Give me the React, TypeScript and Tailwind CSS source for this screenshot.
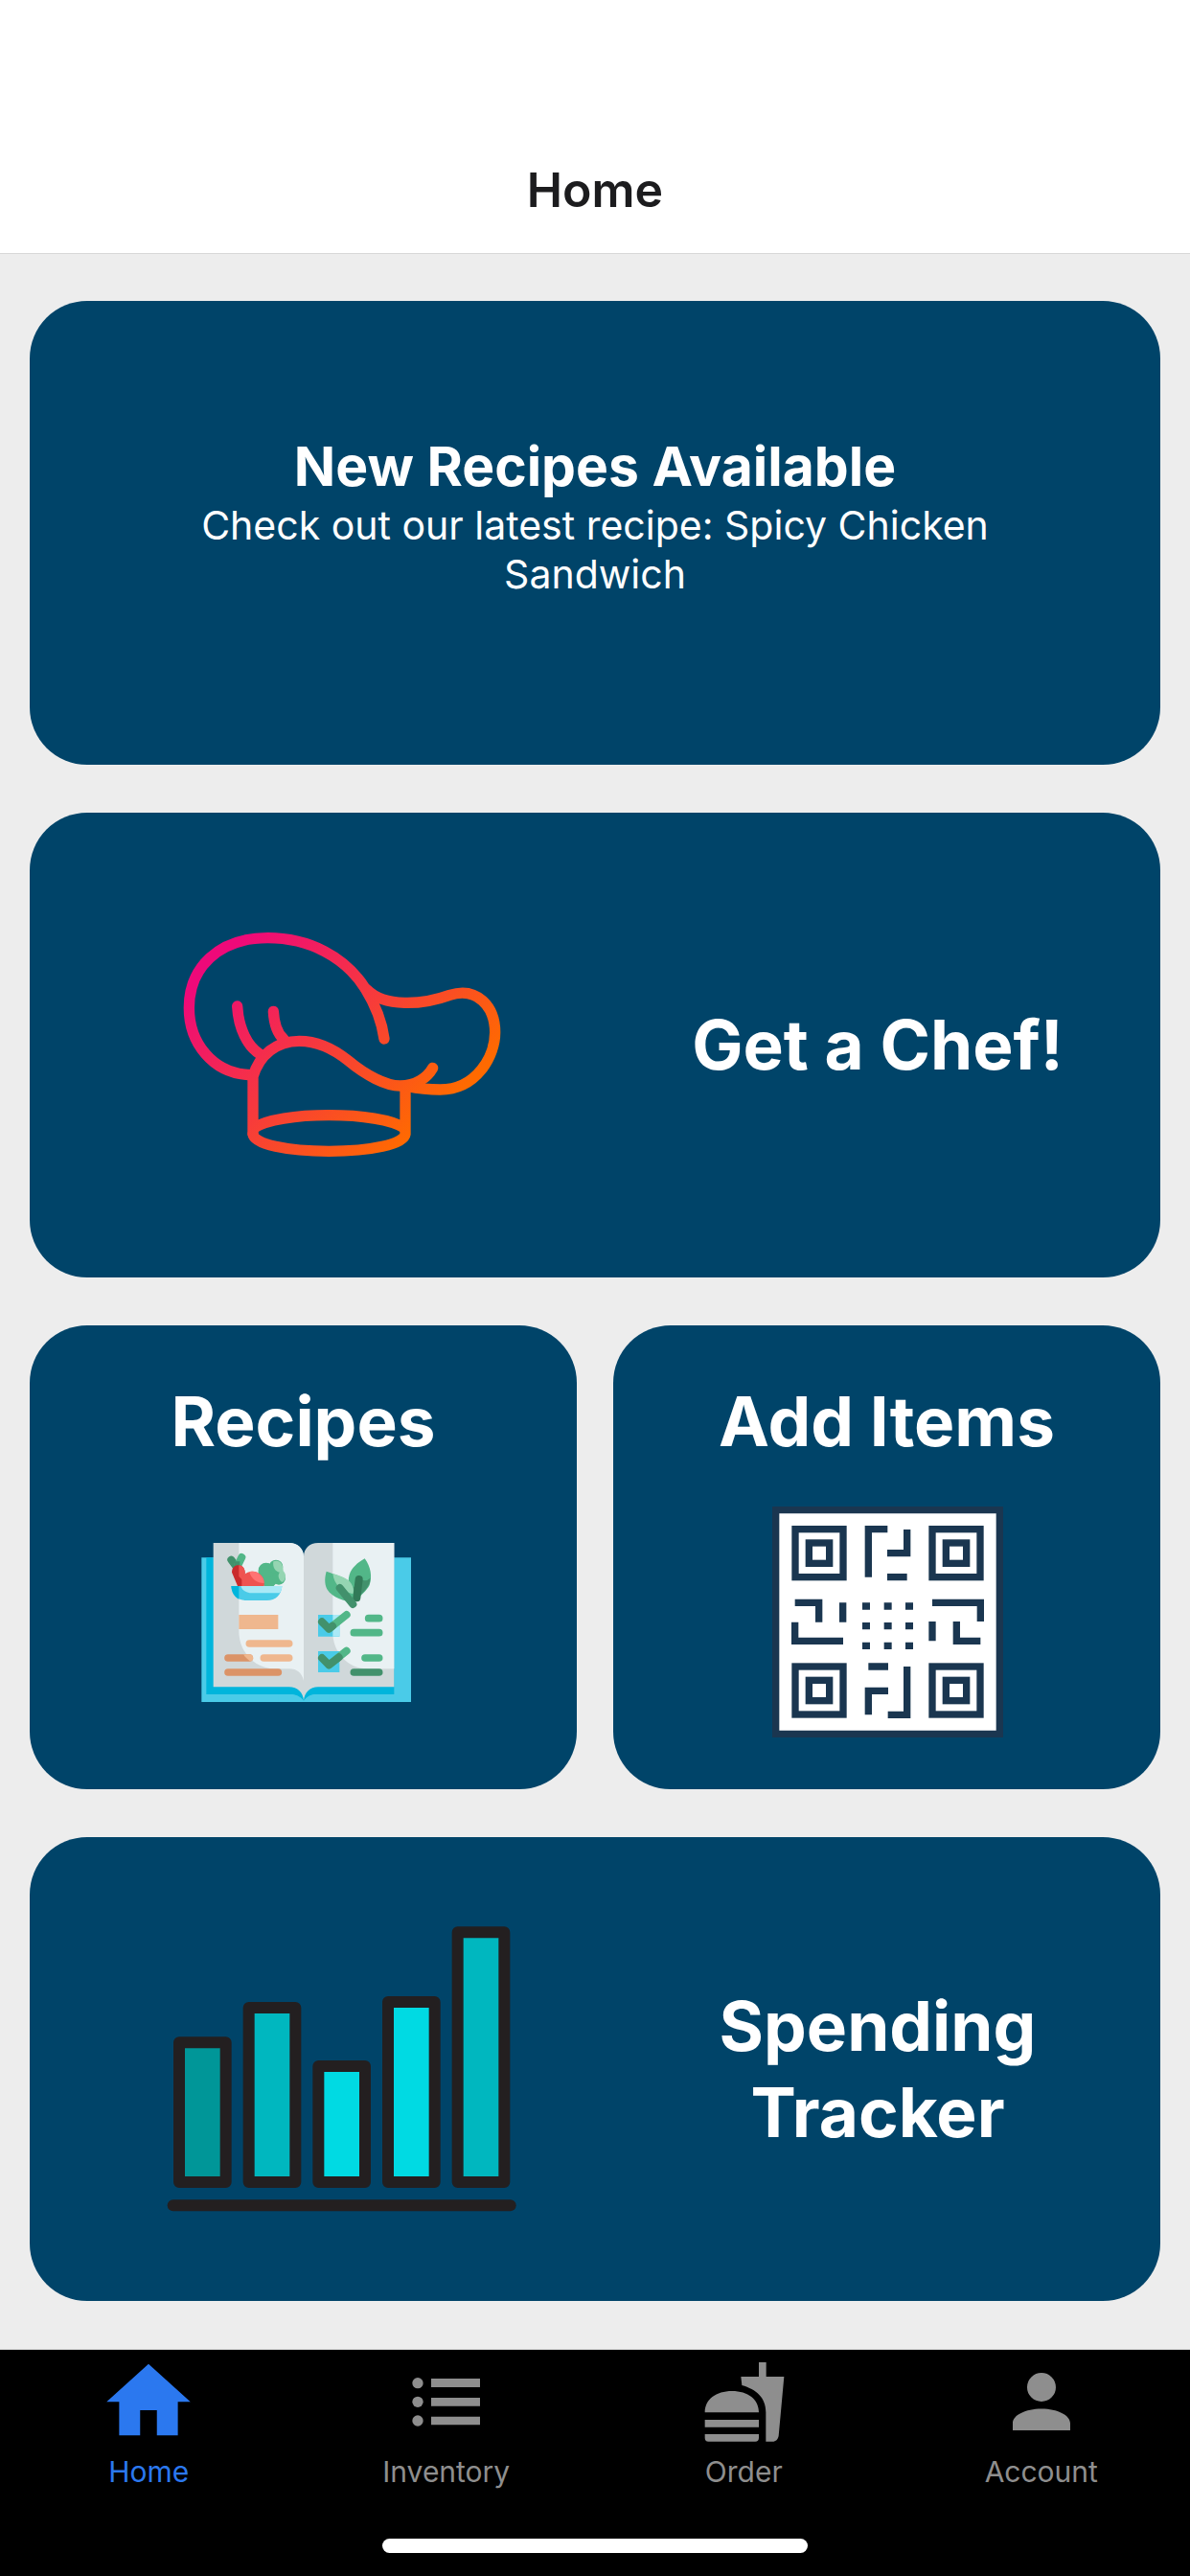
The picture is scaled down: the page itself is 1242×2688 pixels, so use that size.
import type { ReactNode } from "react";

function ChefHat() {
  return (
    <svg viewBox="0 0 1110 840" className="h-[280px] w-[370px]" aria-hidden="true">
      <defs>
        <linearGradient id="hat" gradientUnits="userSpaceOnUse" x1="167" y1="167" x2="745" y2="745">
          <stop offset="0" stopColor="#ee0979" />
          <stop offset="1" stopColor="#ff6a00" />
        </linearGradient>
      </defs>
      <g fill="none" stroke="url(#hat)" strokeWidth="34" strokeLinecap="round">
        <path strokeLinecap="butt" d="M279 515C150 515 79 410 79 305C79 180 170 86 325 86C455 86 568 145 631 245" />
        <path d="M631 245C662 295 683 350 690 402" />
        <path d="M636 248C690 304 810 296 895 265C980 238 1037 300 1037 382C1037 455 980 561 865 561C835 561 805 559 762 550" />
        <path d="M279 700V520C300 452 352 409 424 409C480 409 530 432 577 470C632 516 695 549 740 549C790 549 825 523 842 493" />
        <path d="M230 300C234 370 262 425 300 449" />
        <path d="M343 316C345 350 355 385 375 402" />
        <path d="M279 700C283 732 385 754 517 754S751 732 756 700V555" />
        <path d="M282 681C320 655 415 641 517 641S715 655 753 681" />
      </g>
    </svg>
  );
}

function RecipeBook() {
  return (
    <svg viewBox="-25 -75 810 810" className="size-[270px]" aria-hidden="true">
      <path fill="#4acbe8" d="M60 136H716V588H60Z" />
      <path fill="#00b5dc" d="M75 136H663V564H420C402 564 388 572 380 585C372 572 356 564 335 564H75Z" />
      <path fill="#4acbe8" d="M300 564H335C356 564 372 572 380 586V588H300ZM460 564H420C402 564 388 572 380 586V588H460Z" />
      <path fill="#004469" d="M330 88H430V136H330Z" />
      <path fill="#d0d8da" d="M97 90H334C361 90 380 108 380 133C380 108 398 90 425 90H663V541H425C400 541 382 558 380 584C378 558 361 541 334 541H97Z" />
      <path fill="#e9f1f3" d="M177 90H334C361 90 380 108 380 133V521C374 498 360 484 334 484H290C225 484 177 430 177 365Z" />
      <path fill="#e9f1f3" d="M471 90H663V484H580C515 484 471 430 471 370Z" />

      <path d="M153 143L168 163" stroke="#42916c" strokeWidth="24" strokeLinecap="round" />
      <path d="M186 135L174 160" stroke="#52b788" strokeWidth="24" strokeLinecap="round" />
      <path d="M165 148L180 148V165H160Z" fill="#42916c" />
      <path fill="#c92a2c" d="M155 182C155 168 164 160 175 160C188 160 196 170 196 184L192 225H173Z" />
      <path fill="#ef5350" d="M177 160C189 161 196 170 196 184L192 210L177 195Z" />
      <path fill="#52b788" d="M256 225H286L292 218L311 219C320 200 300 160 275 156C255 148 236 165 238 186Z" />
      <circle cx="262" cy="176" r="24" fill="#52b788" />
      <circle cx="293" cy="165" r="22" fill="#52b788" />
      <circle cx="302" cy="200" r="21" fill="#52b788" />
      <path fill="#95d5b2" d="M285 148C302 141 316 152 316 178C327 188 325 208 312 213C300 203 298 190 305 182C290 180 282 165 285 148Z" />
      <path fill="#ef5350" d="M186 225V198C196 184 207 179 220 179C241 179 256 196 256 216V225Z" />
      <path fill="#ff7373" d="M210 181C232 174 256 194 256 216C234 216 216 204 210 181Z" />
      <path fill="#4acbe8" d="M153 225H312C310 252 292 270 265 270H200C173 270 155 252 153 225Z" />
      <path fill="#00b5dc" d="M153 225H177V266C163 259 154 245 153 225Z" />
      <path fill="#a9e9f6" d="M183 225H312C312 234 309 241 305 247H220C200 247 187 238 183 225Z" />

      <path fill="#efb78e" d="M177 315H300V360H177Z" />
      <g strokeLinecap="round" strokeWidth="23" fill="none">
        <path stroke="#efb78e" d="M210 405H334M255 450H334" />
        <path stroke="#db9367" d="M143 450H210M143 495H300" />
        <path stroke="#52b788" d="M583 326H616M537 371H616M572 450H616" />
        <path stroke="#42916c" d="M537 495H616" />
      </g>
      <path fill="#efb78e" d="M191 439H210C218 439 222 445 222 453C220 458 217 460 213 461C204 455 197 448 191 439Z" />

      <path fill="#52b788" d="M571 139C590 165 595 195 586 222C577 240 558 255 538 275C525 250 515 215 523 190C530 168 548 152 571 139Z" />
      <path fill="#42916c" d="M588 200C590 226 566 244 545 264L535 230L560 205C570 210 580 208 588 200Z" />
      <path fill="#52b788" d="M451 179C480 190 515 198 530 220C538 236 540 256 540 276C505 273 470 262 453 235C444 216 446 196 451 179Z" />
      <path fill="#95d5b2" d="M471 186C500 194 526 204 533 226C537 236 536 244 534 250C500 240 475 222 471 186Z" />
      <path d="M553 204L546 262" stroke="#327a58" strokeWidth="24" strokeLinecap="round" />
      <path d="M493 231L534 282" stroke="#42916c" strokeWidth="24" strokeLinecap="round" />

      <path fill="#4acbe8" d="M425 315H492V383H425ZM425 429H492V495H425Z" />
      <path fill="#a9e9f6" d="M471 315H492V383H471Z" />
      <g fill="none" strokeWidth="24" strokeLinecap="round" strokeLinejoin="round">
        <path stroke="#52b788" d="M459 359L514 315M459 472L514 428" />
        <path stroke="#42916c" d="M437 337L459 359L470 350M437 450L459 472L490 448" />
      </g>
    </svg>
  );
}

const finders = [
  [106, 111],
  [535, 111],
  [106, 541],
  [535, 541],
];

function QrCode() {
  return (
    <svg viewBox="0 0 810 810" className="size-[270px]" aria-hidden="true">
      <path fill="#1a3650" d="M45 51H768V774H45Z" />
      <path fill="#fff" d="M67 73H746V752H67Z" />
      <g fill="none" stroke="#1a3650" strokeWidth="22">
        {finders.map(([x, y]) => (
          <g key={`${x}-${y}`}>
            <rect x={x + 11} y={y + 11} width="150" height="150" />
            <rect x={x + 54} y={y + 54} width="64" height="64" />
          </g>
        ))}
        <path d="M406 122H346V272M467 123V197H405M405 272H467" />
        <path d="M116 352H191V413M266 352V413M116 413V472H267" />
        <path d="M546 352H697V411M546 411V472M622 411V472H697" />
        <path d="M346 552H408M467 552V703H407M408 628H346V703" />
        <path d="M327 363H351M395 363H419M462 363H486M327 425H351M395 425H419M462 425H486M327 487H351M395 487H419M462 487H486" />
      </g>
    </svg>
  );
}

const bars = [
  { x: 79, top: 454, fill: "#009698" },
  { x: 297, top: 345, fill: "#00b7bf" },
  { x: 515, top: 528, fill: "#00dae3" },
  { x: 733, top: 327, fill: "#00dae3" },
  { x: 951, top: 109, fill: "#00b7bf" },
];

function BarChart() {
  return (
    <svg viewBox="-14 12 1200 1050" className="h-[350px] w-[400px]" aria-hidden="true">
      <g stroke="#231f20" strokeWidth="36" strokeLinejoin="round" strokeLinecap="round">
        {bars.map((b) => (
          <rect key={b.x} x={b.x} y={b.top} width="146" height={891 - b.top} fill={b.fill} />
        ))}
        <path d="M60 964H1116" />
      </g>
    </svg>
  );
}

function WideCard({ art, label }: { art: ReactNode; label: string }) {
  return (
    <button className="flex items-center rounded-[60px] bg-[#004469]">
      <span className="flex w-[55%] justify-center">{art}</span>
      <span className="w-[40%] text-[71px] leading-[90px] font-bold">{label}</span>
    </button>
  );
}

function SquareCard({ art, label }: { art: ReactNode; label: string }) {
  return (
    <button className="flex flex-1 flex-col items-center rounded-[60px] bg-[#004469] pt-[55px]">
      <span className="text-[71px] leading-[90px] font-bold">{label}</span>
      <span className="mt-[27px]">{art}</span>
    </button>
  );
}

const tabs = [
  {
    label: "Home",
    viewBox: "0.57 0.3 22.86 22.86",
    icon: <path d="M10 20V14H14V20H19V12H22L12 3L2 12H5V20Z" />,
  },
  {
    label: "Inventory",
    viewBox: "0 0 300 300",
    icon: (
      <>
        <circle cx="60" cy="95" r="17" />
        <circle cx="60" cy="154" r="17" />
        <circle cx="60" cy="213" r="17" />
        <path d="M102 81H255V108H102ZM102 141H255V167H102ZM102 200H255V226H102Z" />
      </>
    ),
  },
  {
    label: "Order",
    viewBox: "0 0 300 300",
    icon: (
      <>
        <path d="M198 30H221V75H277L260 260C258 271 251 278 241 278H220V187C220 140 190 115 145 102L142 75H198Z" />
        <path d="M29 187C29 146 64 120 114 120S198 146 198 187ZM29 210H198V233H29ZM29 255H198V267C198 274 194 278 187 278H40C33 278 29 274 29 267Z" />
      </>
    ),
  },
  {
    label: "Account",
    viewBox: "-1.33 -1.6 26.67 26.67",
    icon: (
      <path d="M12 4A4 4 0 0 1 16 8A4 4 0 0 1 12 12A4 4 0 0 1 8 8A4 4 0 0 1 12 4M12 14C16.42 14 20 15.79 20 18V20H4V18C4 15.79 7.58 14 12 14Z" />
    ),
  },
];

export default function App() {
  return (
    <div className="flex min-h-screen flex-col bg-[#ededed] font-['Inter',sans-serif]">
      <header className="flex justify-center border-b border-[#d8d8d8] bg-white pt-[168px] pb-[36px]">
        <h1 className="text-[50px] leading-[60px] font-semibold text-[#1c1c1e]">Home</h1>
      </header>

      <main className="grid flex-1 auto-rows-fr gap-[50px] px-[31px] pt-[49px] pb-[50px] text-center text-white">
        <section className="flex flex-col items-center justify-center rounded-[60px] bg-[#004469] px-[150px] pb-[36px]">
          <h2 className="text-[57px] leading-[72px] font-bold">New Recipes Available</h2>
          <p className="text-[41px] leading-[51px]">Check out our latest recipe: Spicy Chicken Sandwich</p>
        </section>
        <WideCard art={<ChefHat />} label="Get a Chef!" />
        <div className="flex gap-[38px]">
          <SquareCard art={<RecipeBook />} label="Recipes" />
          <SquareCard art={<QrCode />} label="Add Items" />
        </div>
        <WideCard art={<BarChart />} label="Spending Tracker" />
      </main>

      <footer className="border-t border-[#d8d8d8] bg-black">
        <nav className="flex pt-[3px]">
          {tabs.map((tab, i) => (
            <a
              key={tab.label}
              href="#"
              aria-current={i === 0 ? "page" : undefined}
              className={`flex flex-1 flex-col items-center gap-[6px] ${i === 0 ? "text-[#2b78ef]" : "text-[#8e8e8e]"}`}
            >
              <svg viewBox={tab.viewBox} fill="currentColor" className="size-[100px]" aria-hidden="true">
                {tab.icon}
              </svg>
              <span className="text-[30px] leading-[36px]">{tab.label}</span>
            </a>
          ))}
        </nav>
        <div className="mx-auto mt-[52px] mb-[24px] h-[15px] w-[444px] rounded-full bg-white" />
      </footer>
    </div>
  );
}
